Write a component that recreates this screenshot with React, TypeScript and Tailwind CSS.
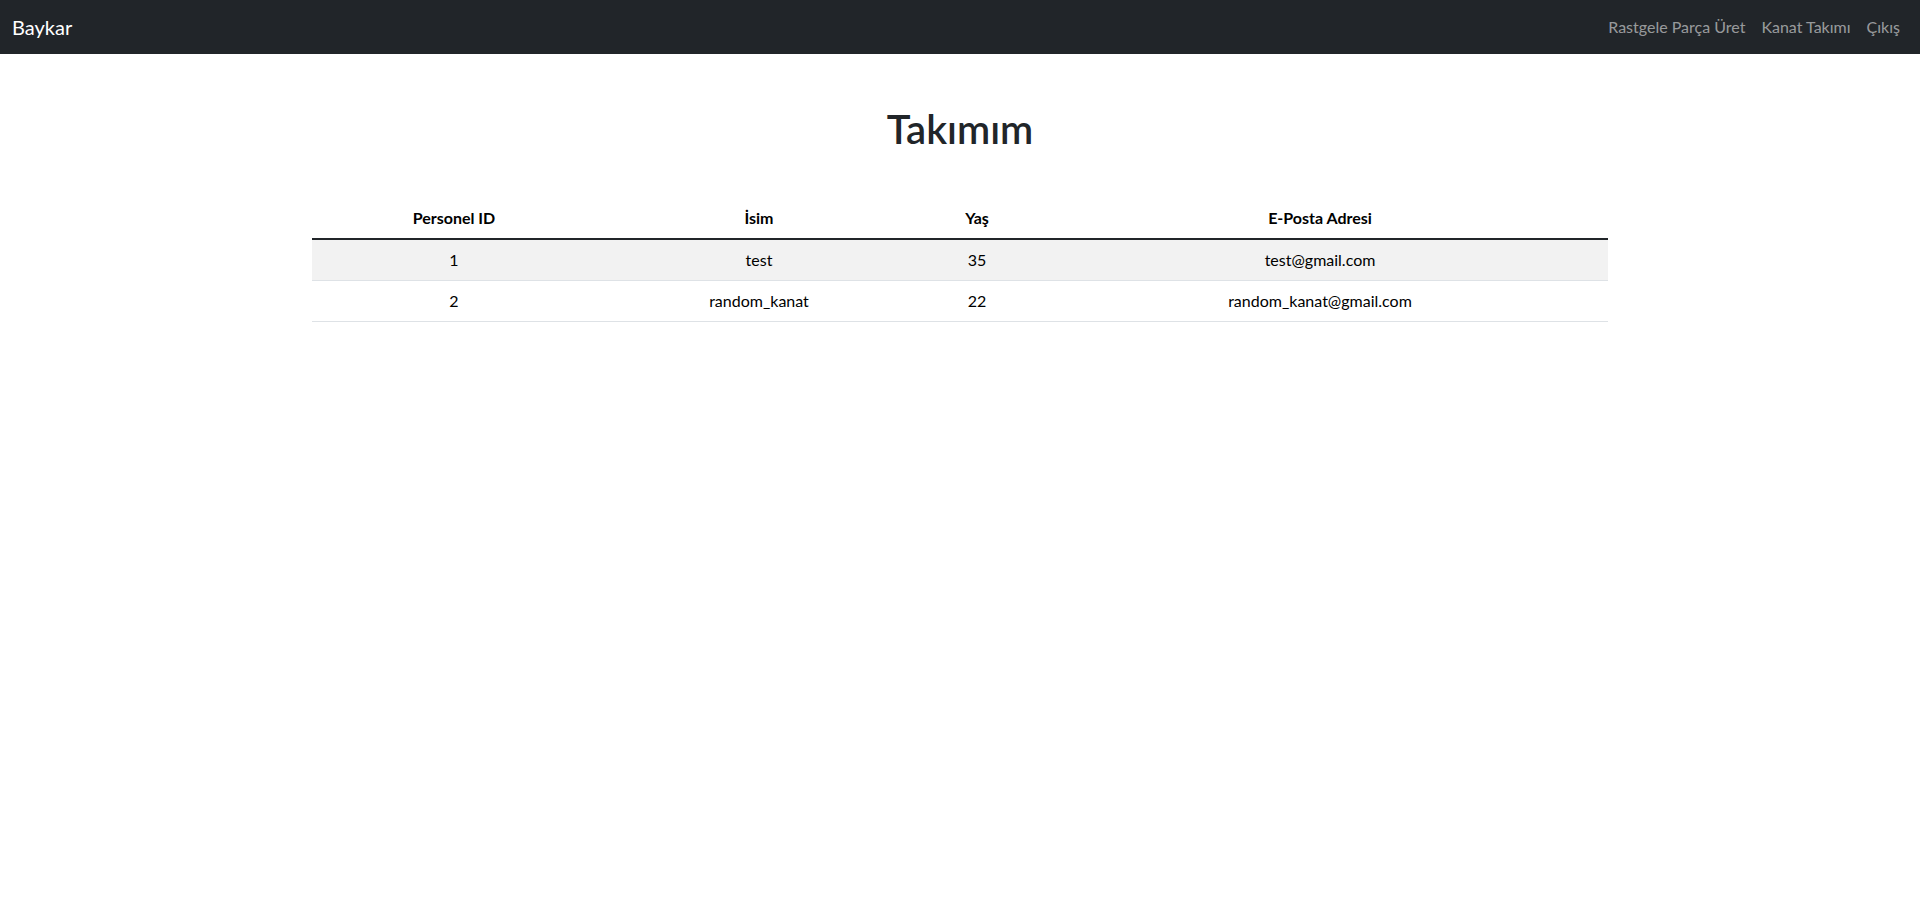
const members = [
  { id: 1, name: "test", age: 35, email: "test@gmail.com" },
  { id: 2, name: "random_kanat", age: 22, email: "random_kanat@gmail.com" },
];

const links = ["Rastgele Parça Üret", "Kanat Takımı", "Çıkış"];

function Navbar() {
  return (
    <nav className="flex h-[54px] items-center justify-between bg-[#212529] px-3">
      <a href="#" className="py-[5px] text-[20px] leading-[30px] text-white">
        Baykar
      </a>
      <ul className="flex items-center">
        {links.map((l) => (
          <li key={l}>
            <a href="#" className="block px-2 py-2 text-base leading-6 text-[#ffffff8c]">
              {l}
            </a>
          </li>
        ))}
      </ul>
    </nav>
  );
}

export default function App() {
  return (
    <div className="min-h-screen bg-white font-['Lato','Liberation_Sans',sans-serif] text-[#212529]">
      <Navbar />
      <main className="mx-auto max-w-[1320px] px-3">
        <h1 className="mt-[51px] mb-[45px] text-center text-[40px] font-semibold leading-[48px]">Takımım</h1>
        <table className="w-full border-collapse text-center text-base leading-6 text-black">
          <thead>
            <tr>
              <th className="w-[284px] p-2 font-bold">Personel ID</th>
              <th className="w-[326px] p-2 font-bold">İsim</th>
              <th className="w-[110px] p-2 font-bold">Yaş</th>
              <th className="p-2 font-bold">E-Posta Adresi</th>
            </tr>
          </thead>
          <tbody className="border-t-2 border-[#212529]">
            {members.map((m, i) => (
              <tr
                key={m.id}
                className={`border-b border-[#dee2e6] ${i % 2 === 0 ? "bg-[#f2f2f2]" : "bg-white"}`}
              >
                <td className="p-2">{m.id}</td>
                <td className="p-2">{m.name}</td>
                <td className="p-2">{m.age}</td>
                <td className="p-2">{m.email}</td>
              </tr>
            ))}
          </tbody>
        </table>
      </main>
    </div>
  );
}
